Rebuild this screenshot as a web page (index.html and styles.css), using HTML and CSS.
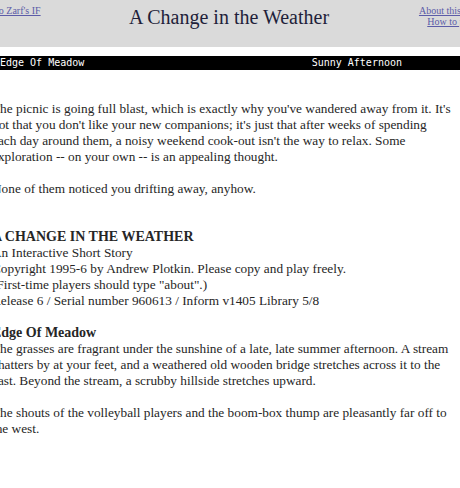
FILE: index.html
```html
<!DOCTYPE html>
<html lang="en">
  <head>
    <meta charset="UTF-8" />
    <meta name="viewport" content="width=device-width, initial-scale=1.0" />
    <title>A Change in the Weather</title>
    <link rel="stylesheet" href="styles.css">
  </head>
  <body>
    <header class="banner">
      <div class="nav nav-left">
        <a href="#">Back to Zarf's IF</a>
      </div>
      <h1>A Change in the Weather</h1>
      <div class="nav nav-right">
        <a href="#">About this game</a>
        <a href="#">How to play</a>
      </div>
    </header>

    <div class="status">
      <span class="status-room">Edge Of Meadow</span>
      <span class="status-time">Sunny Afternoon</span>
    </div>

    <div class="story">
      <p>The picnic is going full blast, which is exactly why you've wandered away from it. It's<br>
        not that you don't like your new companions; it's just that after weeks of spending<br>
        each day around them, a noisy weekend cook-out isn't the way to relax. Some<br>
        exploration -- on your own -- is an appealing thought.</p>
      <p>None of them noticed you drifting away, anyhow.</p>
      <div class="gap"></div>
      <p>
        <b class="title">A CHANGE IN THE WEATHER</b><br>
        An Interactive Short Story<br>
        Copyright 1995-6 by Andrew Plotkin. Please copy and play freely.<br>
        (First-time players should type "about".)<br>
        Release 6 / Serial number 960613 / Inform v1405 Library 5/8
      </p>
      <p class="room">Edge Of Meadow</p>
      <p>The grasses are fragrant under the sunshine of a late, late summer afternoon. A stream<br>
        chatters by at your feet, and a weathered old wooden bridge stretches across it to the<br>
        east. Beyond the stream, a scrubby hillside stretches upward.</p>
      <p>The shouts of the volleyball players and the boom-box thump are pleasantly far off to<br>
        the west.</p>
    </div>
  </body>
</html>
```

FILE: styles.css
```css
body {
  margin: 0;
  background-color: #fff;
  overflow: hidden;
  font-family: "Liberation Serif", serif;
}
.banner {
  display: grid;
  grid-template-columns: 1fr auto 1fr;
  align-items: start;
  height: 47px;
  margin: 0 -30px 9px;
  padding: 0 2px;
  background-color: #dadada;
}
.banner h1 {
  margin: 6px 2px 0 0;
  font-size: 20px;
  font-weight: normal;
  color: #1f1f3a;
}
.nav {
  padding-top: 5px;
  font-size: 10px;
  line-height: 11px;
}
.nav a {
  display: block;
  color: #5c5ca8;
}
.nav-left {
  padding-left: 1px;
}
.nav-right {
  justify-self: end;
  width: 72px;
  text-align: center;
}
.status {
  display: flex;
  justify-content: space-between;
  height: 14px;
  margin-left: -6px;
  padding: 0 58px 0 6px;
  background-color: #000;
  color: #fff;
  font-family: "DejaVu Sans Mono", monospace;
  font-size: 10px;
  line-height: 14px;
}
.story {
  margin-left: -8px;
  padding-top: 31px;
  color: #262626;
  font-size: 13.3px;
  line-height: 16px;
  white-space: nowrap;
}
.story p {
  margin: 0 0 16px;
}
.story .gap {
  height: 16px;
}
.story .title,
.story p.room {
  font-size: 14px;
  font-weight: bold;
}
.story p.room {
  margin: 0;
}
```
